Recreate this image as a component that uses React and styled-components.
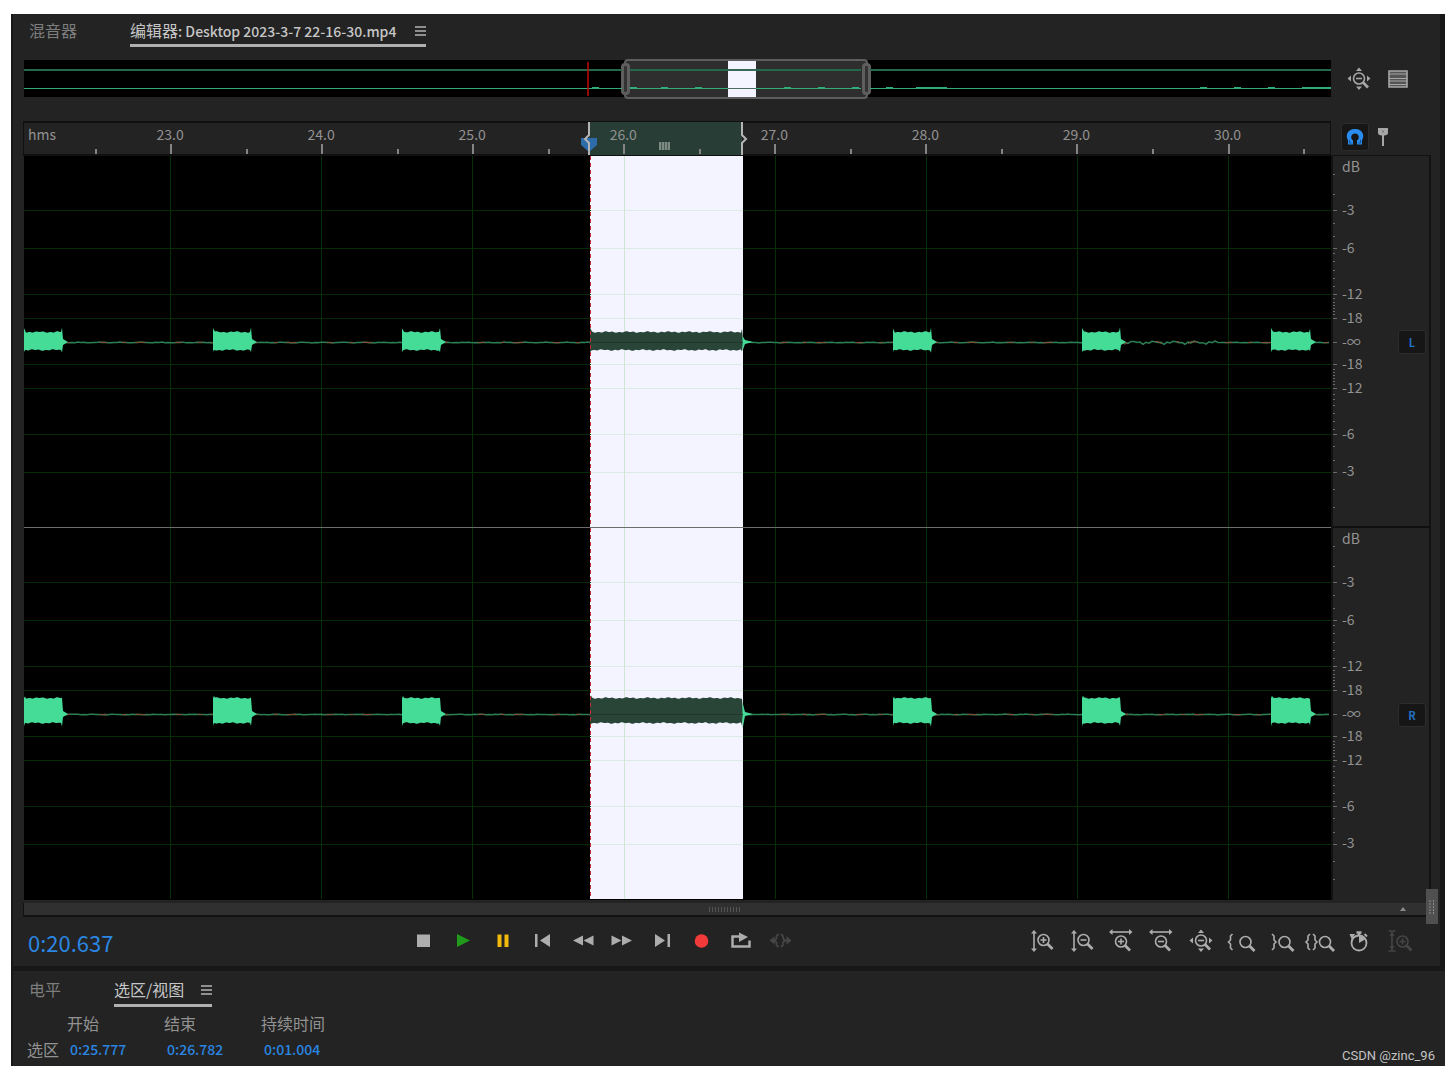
import React from "react";
import styled, { createGlobalStyle } from "styled-components";

const GlobalStyle = createGlobalStyle`
  * {
    box-sizing: border-box;
  }
  body {
    margin: 0;
    background: #fff;
    color: #929292;
    font-family: "Noto Sans CJK SC", "Noto Sans", sans-serif;
    font-size: 14px;
  }
  button {
    padding: 0;
    border: 0;
    background: none;
    color: inherit;
    font: inherit;
    cursor: pointer;
  }
  svg {
    display: block;
    overflow: visible;
  }
`;

const Page = styled.div`
  display: flex;
  min-height: 100vh;
  padding: 14px 6px 6px 11px;
`;
const Shell = styled.div`
  position: relative;
  display: flex;
  flex: 1;
  flex-direction: column;
  gap: 5px;
  min-width: 0;
  padding-left: 2px;
  background: #171717;
`;
const EditorPanel = styled.section`
  margin-right: 5px;
  background: #232323;
`;
const InfoPanel = styled.section`
  flex: 1;
  background: #232323;
`;

// Tabs
const Tabs = styled.div`
  display: flex;
  gap: 53px;
  height: ${(p) => p.$height}px;
  padding-left: 16px;
`;
const Tab = styled.button`
  display: flex;
  align-items: center;
  gap: 17px;
  padding-top: 2px;
  border-bottom: 3px solid ${(p) => (p.$active ? "#b0b0b0" : "transparent")};
  color: ${(p) => (p.$active ? "#c6c6c6" : "#7d7d7d")};
  font-size: 16px;
  line-height: 20px;
  white-space: nowrap;
`;
const FileName = styled.span`
  padding-right: 2px;
  font-size: 14px;
  font-weight: 500;
`;

// Overview strip
const Split = styled.div`
  display: grid;
  grid-template-columns: minmax(0, 1fr) 109px;
  padding-left: 11px;
`;
const Overview = styled.div`
  position: relative;
  height: 37px;
  margin: 13px 0 24px;
  background: #000;
  svg {
    position: relative;
  }
`;
const ViewWindow = styled.div`
  position: absolute;
  top: -1px;
  bottom: -2px;
  left: 45.9%;
  width: 18.7%;
  border: 2px solid #5e5e5e;
  border-radius: 4px;
  background: #2e2e2e;
`;
const WindowHandle = styled.span`
  position: absolute;
  top: 2px;
  bottom: 2px;
  ${(p) => p.$side}: -5px;
  width: 9px;
  border: 3px solid #5e5e5e;
  border-radius: 4px;
  background: #333;
`;
const OverviewTools = styled.div`
  display: flex;
  align-items: center;
  gap: 15px;
  height: 37px;
  margin-top: 13px;
  padding-left: 16px;
  color: #a6a6a6;
`;

// Time ruler
const Ruler = styled.div`
  position: relative;
  display: flex;
  height: 35px;
  margin-left: -1px;
  border: 1px solid #101010;
  border-top-width: 2px;
  border-bottom-width: 2px;
  line-height: 22px;
`;
const RulerUnit = styled.span`
  flex: 467 0 0;
  min-width: 0;
  text-indent: 4px;
`;
const RulerCell = styled.span`
  position: relative;
  flex: ${(p) => p.$span} 0 0;
  min-width: 0;
  text-align: center;
  &::before,
  &::after {
    content: "";
    position: absolute;
    bottom: 0;
    left: 0;
    width: 2px;
    height: 5px;
    background: #858585;
  }
  &::after {
    display: ${(p) => (p.$last ? "none" : "block")};
    left: 50%;
    height: 10px;
  }
`;
const RulerSelection = styled.div`
  position: absolute;
  top: -1px;
  bottom: -1px;
  left: 43.3%;
  width: 11.7%;
  background: #283d35;
`;
const RulerBracket = styled.svg`
  position: absolute;
  top: 0;
  ${(p) => p.$side}: -9px;
`;
const RulerGrip = styled.span`
  position: absolute;
  top: 20px;
  left: calc(50% - 7px);
  width: 11px;
  height: 8px;
  background: repeating-linear-gradient(90deg, #7d8a84 0 2px, #4c5d55 2px 3px);
`;
const RulerTools = styled.div`
  display: flex;
  align-items: center;
  gap: 7px;
  padding: 0 0 3px 10px;
`;
const SnapButton = styled.button`
  display: grid;
  place-items: center;
  width: 28px;
  height: 28px;
  border: 1px solid #2c2c2c;
  border-radius: 3px;
  background: #161616;
`;

// Waveforms
const Waves = styled.div`
  position: relative;
  background: #000;
`;
const Scales = styled.div`
  margin: -1px 9px 0 0;
  border: 2px solid #121212;
  border-top-width: 1px;
  border-bottom: 0;
`;
const Scale = styled.div`
  display: flex;
  height: ${(p) => p.$height}px;
  border-bottom: ${(p) => (p.$divided ? "2px solid #101010" : "0")};
`;
const ScaleMarks = styled.div`
  display: flex;
  flex: 1;
  flex-direction: column;
  padding-left: 1px;
`;
const ScaleMark = styled.span`
  margin-top: ${(p) => p.$gap}px;
  line-height: 16px;
`;
const ChannelButton = styled.button`
  align-self: center;
  width: 28px;
  height: 24px;
  margin: 2px 3px 0 0;
  border: 1px solid #2c2c2c;
  border-radius: 3px;
  background: #161616;
  color: #2470c4;
  font-size: 11px;
  font-weight: 700;
  line-height: 22px;
`;

const ScrollTrack = styled.div`
  position: relative;
  display: flex;
  align-items: center;
  justify-content: center;
  height: 14px;
  margin: 3px 13px 0 10px;
  border: 1px solid #121212;
  border-top: 0;
  border-bottom-width: 2px;
  background: #303030;
`;
const ScrollGrip = styled.span`
  width: 32px;
  height: 5px;
  background: repeating-linear-gradient(90deg, #555 0 1px, transparent 1px 3px);
`;
const ScrollArrow = styled.svg`
  position: absolute;
  right: 20px;
`;
const ZoomHandle = styled.span`
  position: absolute;
  right: -12px;
  bottom: -9px;
  display: grid;
  place-items: center;
  width: 12px;
  height: 35px;
  background: #505050;
`;

// Transport
const Transport = styled.div`
  display: grid;
  grid-template-columns: 383fr 381px 238fr 381px;
  align-items: center;
  height: 49px;
  padding: 0 29px 1px 15px;
`;
const CurrentTime = styled.span`
  padding-top: 2px;
  color: #2a86e2;
  font-size: 22px;
  line-height: 28px;
`;
const ButtonRow = styled.div`
  display: flex;
  justify-content: space-between;
  grid-column: ${(p) => p.$column};
  color: #adadad;
`;
const IconButton = styled.button`
  width: 24px;
  height: 24px;
  color: ${(p) => p.$color || "inherit"};
`;

// Selection / view table
const Table = styled.table`
  margin: 3px 0 0 14px;
  border-collapse: collapse;
  table-layout: fixed;
  width: 331px;
  th,
  td {
    height: 26px;
    padding: 0;
    font-size: 16px;
    font-weight: 400;
    line-height: 20px;
    text-align: left;
    white-space: nowrap;
  }
  th:first-child {
    width: 40px;
  }
  th + th {
    width: 97px;
  }
  td {
    padding-left: 3px;
    color: #2a86e2;
    font-size: 14px;
    font-weight: 500;
  }
`;
const Watermark = styled.span`
  position: absolute;
  right: 10px;
  bottom: 2px;
  color: #c4c4c4;
  font-family: Roboto, "Liberation Sans", sans-serif;
  font-size: 13px;
  line-height: 16px;
`;

const WIDTH = 1307;
const CHANNEL = 372;
const BURSTS = [
  [0, 38],
  [189, 227],
  [378, 416],
  [566, 718],
  [869, 907],
  [1058, 1096],
  [1247, 1286],
];
const CHANNELS = [
  { label: "L", mid: 186, top: 176, bottom: 194, spikeTop: 4, spikeBottom: 2 },
  { label: "R", mid: 186, top: 170, bottom: 195, spikeTop: 0, spikeBottom: 3 },
];
const DB_LINES = [54, 92, 138, 162, 208, 232, 278, 316];
const SECONDS = [146, 297, 448, 600, 751, 902, 1053, 1204];
const DB_MARKS = [
  ["dB", 2],
  ["-3", 27],
  ["-6", 22],
  ["-12", 30],
  ["-18", 8],
  ["-∞", 8],
  ["-18", 6],
  ["-12", 8],
  ["-6", 30],
  ["-3", 21],
];
const MINOR_TICKS = [
  18, 38, 67, 80, 97, 105, 114, 122, 130, 142, 146, 149, 152, 155, 158, 213,
  216, 219, 222, 225, 228, 238, 243, 249, 257, 265, 273, 290, 304, 333, 351,
];

const wobble = (x, seed) =>
  Math.sin(x * 0.9 + seed) * 0.5 + Math.sin(x * 0.31 + seed * 2) * 0.5;

const burstPath = ([start, end], ch, seed) => {
  const up = [];
  const down = [];
  for (let x = start; x <= end; x += 1) {
    const edge = x === start || x === end;
    const near = x - start === 1;
    up.push(
      `${x} ${ch.top - (edge ? ch.spikeTop : near ? 2 : 0) + wobble(x, seed) * 0.8}`
    );
    down.unshift(
      `${x} ${ch.bottom + (edge ? ch.spikeBottom : 0) + wobble(x, seed + 4) * 0.8}`
    );
  }
  const tail = `${end + 1} ${ch.mid - 3} L${end + 6} ${ch.mid} L${end + 1} ${ch.mid + 3}`;
  return `M${up.join(" L")} L${tail} L${down.join(" L")}Z`;
};

const noisePath = (ch, seed) => {
  let d = `M0 ${ch.mid + 0.5}`;
  for (let x = 3; x <= WIDTH; x += 3) {
    const loud = ch.label === "L" && x > 1100 && x < 1192;
    d += ` L${x} ${ch.mid + 0.5 + wobble(x, seed) * (loud ? 1.8 : 0.4)}`;
  }
  return d;
};

const Channel = ({ ch, index }) => (
  <svg
    width="100%"
    height={CHANNEL}
    viewBox={`0 0 ${WIDTH} ${CHANNEL}`}
    preserveAspectRatio="none"
    role="img"
    aria-label={`Channel ${ch.label}`}
  >
    <rect x="566" width="153" height={index ? CHANNEL - 1 : CHANNEL} fill="#f3f4ff" />
    {DB_LINES.map((y) => (
      <g key={y}>
        <path d={`M0 ${y + 0.5}H${WIDTH}`} stroke="#052b05" />
        <path d={`M567 ${y + 0.5}H719`} stroke="#dcebe3" />
      </g>
    ))}
    {SECONDS.map((x) => (
      <path
        key={x}
        d={`M${x + 0.5} 0V${CHANNEL - index}`}
        stroke={x === 600 ? "#cfe6d4" : "#053005"}
      />
    ))}
    <path d={noisePath(ch, index)} fill="none" stroke="#2c7f54" strokeWidth="1.5" />
    <path
      d={noisePath(ch, index + 3)}
      fill="none"
      stroke="#8a4a34"
      strokeDasharray="7 16 4 9 10 30"
    />
    {BURSTS.map((b, i) => (
      <path key={b[0]} d={burstPath(b, ch, i)} fill={i === 3 ? "#284538" : "#45dc98"} />
    ))}
    <path
      d={`M718.5 ${ch.top + 4}L721 ${ch.mid - 2}L729 ${ch.mid}L721 ${ch.mid + 2}L718.5 ${ch.bottom + (index ? 6 : 1)}Z`}
      fill="#45dc98"
    />
    <path d={`M567 ${ch.mid + 0.5}H719`} stroke="#20352b" />
    <path d={`M566.5 0V${CHANNEL - index}`} stroke="#c22d2d" strokeDasharray="4 3" />
    {index === 0 && <path d={`M0 371.5H${WIDTH}`} stroke="#6c6c6c" />}
  </svg>
);

const DbScale = ({ ch, index }) => (
  <Scale $height={CHANNEL} $divided={index === 0}>
    <svg width="8" height={CHANNEL - 2} stroke="#6a6a6a">
      {[...DB_LINES, 186].map((y) => (
        <path key={y} d={`M0 ${y + 0.5}H4`} />
      ))}
      {MINOR_TICKS.map((y) => (
        <path key={y} d={`M0 ${y + 0.5}H2`} />
      ))}
    </svg>
    <ScaleMarks>
      {DB_MARKS.map(([text, gap], i) => (
        <ScaleMark key={i} $gap={gap}>
          {text}
        </ScaleMark>
      ))}
    </ScaleMarks>
    <ChannelButton>{ch.label}</ChannelButton>
  </Scale>
);

const Menu = () => (
  <svg width="11" height="12" viewBox="0 0 11 12" stroke="#8f8f8f" strokeWidth="2">
    <path d="M0 3H11M0 7H11M0 11H11" />
  </svg>
);

const Icon = ({ children }) => (
  <svg
    width="24"
    height="24"
    viewBox="0 0 24 24"
    fill="none"
    stroke="currentColor"
    strokeWidth="1.6"
  >
    {children}
  </svg>
);

// Magnifier with its centre at x, y
const Loupe = ({ x, y, r = 5.5, sign }) => (
  <>
    <circle cx={x} cy={y} r={r} />
    <path
      d={`M${x + r * 0.7} ${y + r * 0.7}L${x + r + 3.5} ${y + r + 3.5}`}
      strokeWidth="2.8"
    />
    {sign && <path d={`M${x - 3} ${y}H${x + 3}`} />}
    {sign === "+" && <path d={`M${x} ${y - 3}V${y + 3}`} />}
  </>
);
const VArrow = ({ x }) => (
  <>
    <path d={`M${x} 3V21`} />
    <path
      d={`M${x - 3} 4.5L${x} 1L${x + 3} 4.5ZM${x - 3} 19.5L${x} 23L${x + 3} 19.5Z`}
      fill="currentColor"
      stroke="none"
    />
  </>
);
const HArrow = () => (
  <>
    <path d="M2 3H21" />
    <path
      d="M3.5 0L0 3L3.5 6ZM20 0L23.5 3L20 6Z"
      fill="currentColor"
      stroke="none"
    />
  </>
);
const ZoomAll = () => (
  <>
    <Loupe x={12} y={11.5} sign="-" />
    <path
      d="M9 4L12 .5L15 4ZM9 19.5L12 23L15 19.5ZM4 8.5L.5 11.5L4 14.5ZM20 8.5L23.5 11.5L20 14.5Z"
      fill="currentColor"
      stroke="none"
    />
  </>
);
const OpenBrace = ({ x }) => (
  <path d={`M${x + 3} 5L${x + 1} 7V11L${x - 1} 13L${x + 1} 15V19L${x + 3} 21`} />
);
const CloseBrace = ({ x }) => (
  <path d={`M${x} 5L${x + 2} 7V11L${x + 4} 13L${x + 2} 15V19L${x} 21`} />
);

const solid = { fill: "currentColor", stroke: "none" };

const TRANSPORT = [
  { name: "Stop", icon: <path d="M6 5.5H19V18H6Z" {...solid} /> },
  { name: "Play", color: "#1f9a1b", icon: <path d="M6 5L19 11.5L6 18Z" {...solid} /> },
  {
    name: "Pause",
    color: "#f0b90b",
    icon: <path d="M7.5 5.5H11.5V18H7.5ZM14.5 5.5H18.5V18H14.5Z" {...solid} />,
  },
  {
    name: "Previous",
    icon: <path d="M5 5H7.5V18H5ZM20 5V18L10 11.5Z" {...solid} />,
  },
  {
    name: "Rewind",
    icon: <path d="M13 6.5V16.5L3 11.5ZM23.5 6.5V16.5L13.5 11.5Z" {...solid} />,
  },
  {
    name: "Fast forward",
    icon: <path d="M2.5 6.5V16.5L12.5 11.5ZM13 6.5V16.5L23 11.5Z" {...solid} />,
  },
  {
    name: "Next",
    icon: <path d="M6 5V18L16 11.5ZM18.5 5H21V18H18.5Z" {...solid} />,
  },
  {
    name: "Record",
    color: "#f23a3a",
    icon: <circle cx="12.5" cy="12" r="6.8" {...solid} />,
  },
  {
    name: "Loop",
    icon: (
      <>
        <path d="M8 7.5H4.5V17.5H21.5V11.5" strokeWidth="2.5" />
        <path d="M8 7.5H13" strokeWidth="2.5" />
        <path d="M11 3.5L20 8L11 13Z" {...solid} />
      </>
    ),
  },
  {
    name: "Skip selection",
    color: "#454545",
    icon: (
      <>
        <path
          d="M10.5 5L8.5 7V9.5L6.5 11.5L8.5 13.5V16L10.5 18M13 5L15 7V9.5L17 11.5L15 13.5V16L13 18"
          strokeWidth="1.8"
        />
        <path d="M6.5 7.5L1.5 11.5L6.5 15.5Z" {...solid} />
        <path d="M15 10.5H18.5V7L23.5 11.5L18.5 16V12.5H15Z" {...solid} />
      </>
    ),
  },
];

const ZOOM = [
  { name: "Zoom in amplitude", icon: <><VArrow x={4} /><Loupe x={13.5} y={11} sign="+" /></> },
  { name: "Zoom out amplitude", icon: <><VArrow x={4} /><Loupe x={13.5} y={11} sign="-" /></> },
  { name: "Zoom in time", icon: <><HArrow /><Loupe x={12} y={12.5} sign="+" /></> },
  { name: "Zoom out time", icon: <><HArrow /><Loupe x={12} y={12.5} sign="-" /></> },
  { name: "Zoom out full", icon: <ZoomAll /> },
  { name: "Zoom in point", icon: <><OpenBrace x={1.5} /><Loupe x={17.5} y={13} /></> },
  { name: "Zoom out point", icon: <><CloseBrace x={4} /><Loupe x={16.5} y={13} /></> },
  {
    name: "Zoom to selection",
    icon: <><OpenBrace x={-1} /><CloseBrace x={5} /><Loupe x={17} y={13} /></>,
  },
  {
    name: "Zoom timed",
    icon: (
      <>
        <circle cx="12" cy="14" r="7.5" strokeWidth="1.8" />
        <path d="M12 3V6M9.5 3.5H14.5" strokeWidth="2.5" />
        <path d="M17.5 5L20 7.5" strokeWidth="2" />
        <path d="M12 14V7A7 7 0 0 1 18 10.5Z" {...solid} />
        <path d="M2.5 5L8 5L5 11Z" {...solid} />
      </>
    ),
  },
  {
    name: "Zoom selection amplitude",
    color: "#454545",
    icon: (
      <>
        <path d="M1.5 2H8.5M1.5 22H8.5" />
        <path d="M5 3V21" />
        <path d="M2.5 7L5 3L7.5 7ZM2.5 17L5 21L7.5 17Z" {...solid} />
        <Loupe x={15.5} y={12.5} sign="+" />
      </>
    ),
  },
];

const OVERVIEW_BURSTS = [568, 606, 637, 671, 760, 794, 828, 862, 1176, 1210, 1244];

const IconButtons = ({ items, column }) => (
  <ButtonRow $column={column}>
    {items.map(({ name, color, icon }) => (
      <IconButton key={name} aria-label={name} $color={color}>
        <Icon>{icon}</Icon>
      </IconButton>
    ))}
  </ButtonRow>
);

const App = () => (
  <Page>
    <GlobalStyle />
    <Shell>
      <EditorPanel>
        <Tabs $height={33}>
          <Tab>混音器</Tab>
          <Tab $active>
            <span>
              编辑器<FileName>: Desktop 2023-3-7 22-16-30.mp4</FileName>
            </span>
            <Menu />
          </Tab>
        </Tabs>

        <Split>
          <Overview>
            <ViewWindow>
              <WindowHandle $side="left" />
              <WindowHandle $side="right" />
            </ViewWindow>
            <svg
              width="100%"
              height="37"
              viewBox={`0 0 ${WIDTH} 37`}
              preserveAspectRatio="none"
              aria-hidden="true"
            >
              <rect x="704" y="1" width="28" height="36" fill="#f3f4ff" />
              <path
                d="M0 10H598M606 10H837M846 10H1307"
                stroke="#24694c"
                strokeWidth="2"
              />
              <path d="M0 28.5H598M606 28.5H837M846 28.5H1307" stroke="#2fae7a" />
              {OVERVIEW_BURSTS.map((x) => (
                <path key={x} d={`M${x} 28H${x + 7}`} stroke="#2fae7a" strokeWidth="2" />
              ))}
              <path d="M892 28H923M1278 28H1307" stroke="#2fae7a" strokeWidth="2" />
              <path d="M704 10H732M704 28.5H732" stroke="#4c6b5e" />
              <path d="M564 2V36" stroke="#c40808" strokeWidth="1.5" />
            </svg>
          </Overview>
          <OverviewTools>
            <IconButton aria-label="Zoom out full">
              <Icon>
                <ZoomAll />
              </Icon>
            </IconButton>
            <IconButton aria-label="Display mode">
              <Icon>
                <path d="M3 4H21V20H3Z" fill="#555" />
                <path d="M3 7H21M3 11.5H21M3 14H21M3 17.5H21" strokeWidth="1" />
              </Icon>
            </IconButton>
          </OverviewTools>
        </Split>

        <Split>
          <Ruler>
            <RulerSelection>
              <RulerGrip />
              <RulerBracket $side="left" width="18" height="33" fill="none">
                <path d="M1 16H17V23L9 30L1 23Z" fill="#2d6cab" />
                <path d="M9 0V13L5 17L9 21V33" stroke="#b4b4b4" strokeWidth="2" />
              </RulerBracket>
              <RulerBracket $side="right" width="18" height="33" fill="none">
                <path d="M9 0V13L13 17L9 21V33" stroke="#b4b4b4" strokeWidth="2" />
              </RulerBracket>
            </RulerSelection>
            <RulerUnit>hms</RulerUnit>
            {SECONDS.map((x, i) => (
              <RulerCell key={x} $span={1000}>
                {23 + i}.0
              </RulerCell>
            ))}
            <RulerCell $span={178} $last />
          </Ruler>
          <RulerTools>
            <SnapButton aria-label="Snapping">
              <svg width="18" height="18" viewBox="0 0 18 18" fill="none">
                <path
                  d="M2 16.5H7V12.5Q4.8 11 5.2 8.5Q6 5.5 9 5.5Q12 5.5 12.8 8.5Q13.2 11 11 12.5V16.5H16V12.5Q18 9 17 6Q15 1 9 1Q3 1 1 6Q0 9 2 12.5Z"
                  fill="#2b8cf0"
                />
                <path d="M3.5 12V15H5.5M14.5 12V15H12.5" stroke="#1a4f86" />
              </svg>
            </SnapButton>
            <button aria-label="Marker">
              <svg width="14" height="20" viewBox="0 0 14 20" fill="#a6a6a6">
                <path d="M2 1H12V6Q12 8 8 8.5V19H6V8.5Q2 8 2 6Z" />
                <circle cx="7" cy="4.5" r="1" fill="#777" />
              </svg>
            </button>
          </RulerTools>
        </Split>

        <Split>
          <Waves>
            {CHANNELS.map((ch, i) => (
              <Channel key={ch.label} ch={ch} index={i} />
            ))}
          </Waves>
          <Scales>
            {CHANNELS.map((ch, i) => (
              <DbScale key={ch.label} ch={ch} index={i} />
            ))}
          </Scales>
        </Split>

        <ScrollTrack>
          <ScrollGrip />
          <ScrollArrow width="6" height="4" viewBox="0 0 6 4" fill="#8a8a8a">
            <path d="M0 4L3 0L6 4Z" />
          </ScrollArrow>
          <ZoomHandle>
            <svg width="6" height="14" viewBox="0 0 6 14" stroke="#8c8c8c">
              <path d="M1 0V14M4.5 0V14" strokeDasharray="2 1" />
            </svg>
          </ZoomHandle>
        </ScrollTrack>

        <Transport>
          <CurrentTime>0:20.637</CurrentTime>
          <IconButtons items={TRANSPORT} column={2} />
          <IconButtons items={ZOOM} column={4} />
        </Transport>
      </EditorPanel>

      <InfoPanel>
        <Tabs $height={36}>
          <Tab>电平</Tab>
          <Tab $active>
            选区/视图
            <Menu />
          </Tab>
        </Tabs>
        <Table>
          <thead>
            <tr>
              <th aria-label="Range" />
              <th scope="col">开始</th>
              <th scope="col">结束</th>
              <th scope="col">持续时间</th>
            </tr>
          </thead>
          <tbody>
            <tr>
              <th scope="row">选区</th>
              <td>0:25.777</td>
              <td>0:26.782</td>
              <td>0:01.004</td>
            </tr>
          </tbody>
        </Table>
      </InfoPanel>
      <Watermark>CSDN @zinc_96</Watermark>
    </Shell>
  </Page>
);

export default App;
